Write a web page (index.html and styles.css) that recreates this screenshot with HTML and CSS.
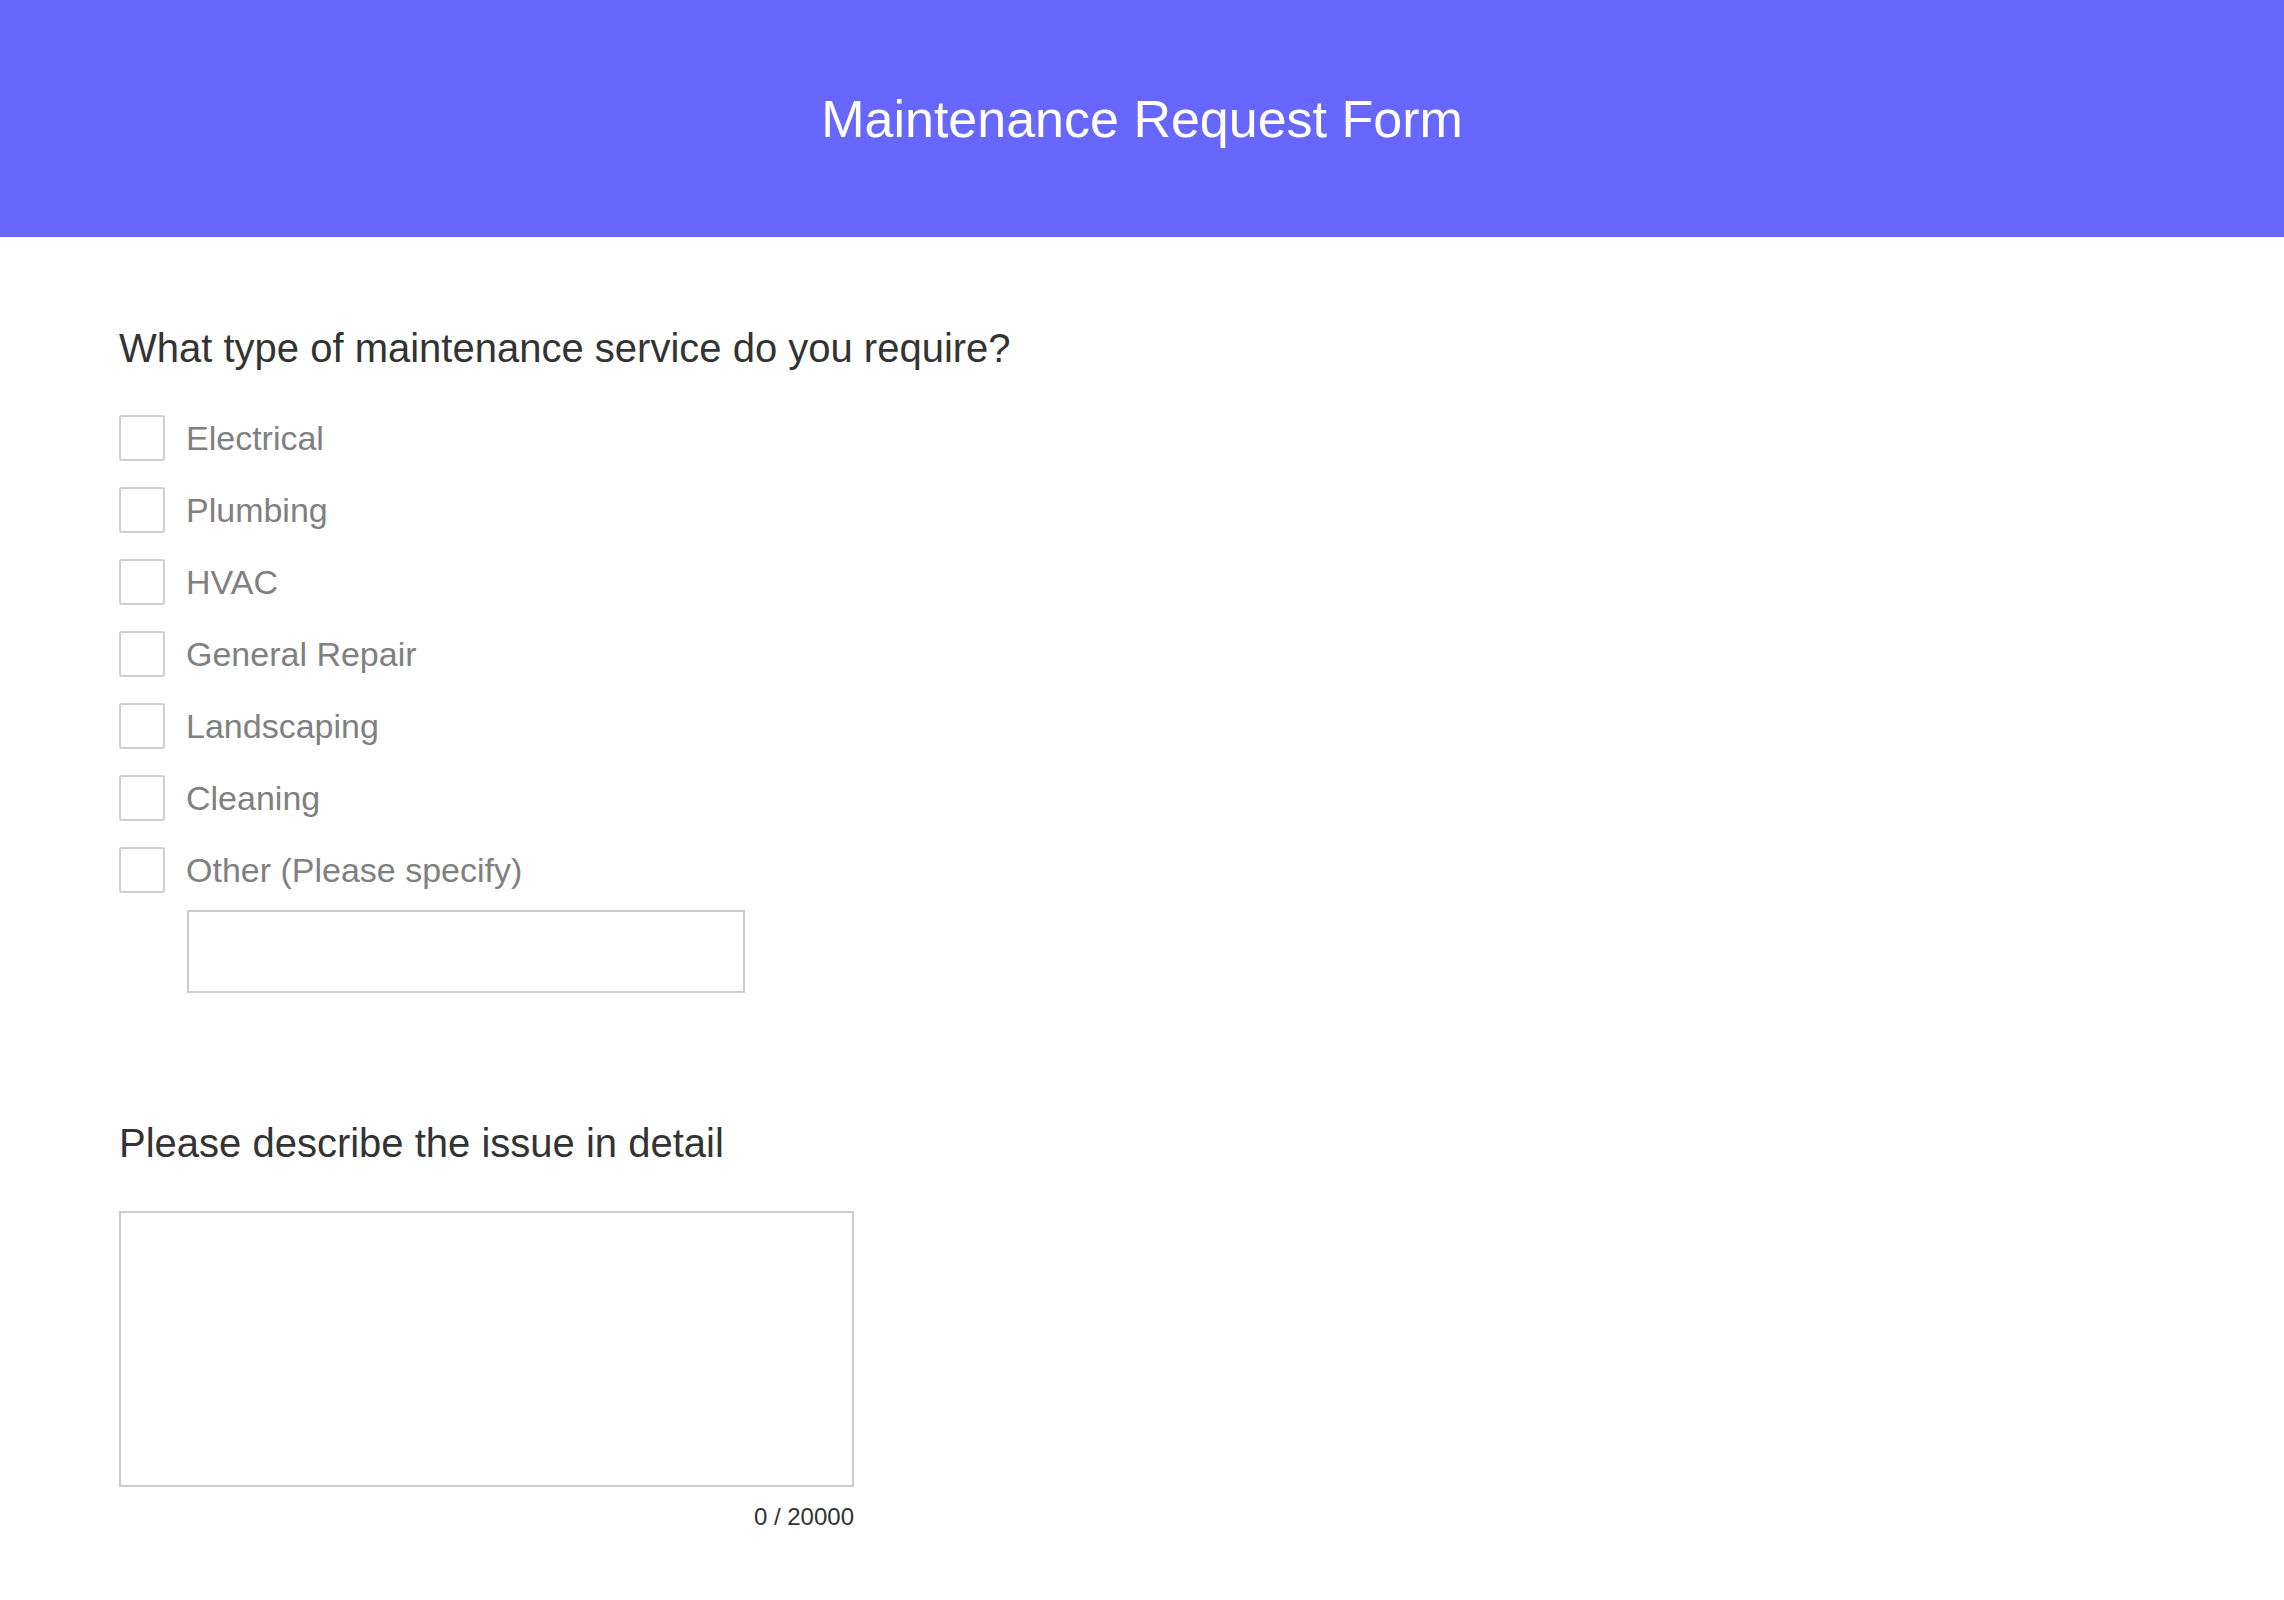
FILE: index.html
```html
<!DOCTYPE html>
<html lang="en">
<head>
<meta charset="utf-8">
<title>Maintenance Request Form</title>
<link rel="stylesheet" href="styles.css">
</head>
<body>
<header class="header">
  <h1 class="title">Maintenance Request Form</h1>
</header>
<main class="content">
  <section class="question q-service">
    <h2 class="question-title">What type of maintenance service do you require?</h2>
    <div class="options">
      <label class="option"><span class="box"></span><span class="option-text">Electrical</span></label>
      <label class="option"><span class="box"></span><span class="option-text">Plumbing</span></label>
      <label class="option"><span class="box"></span><span class="option-text">HVAC</span></label>
      <label class="option"><span class="box"></span><span class="option-text">General Repair</span></label>
      <label class="option"><span class="box"></span><span class="option-text">Landscaping</span></label>
      <label class="option"><span class="box"></span><span class="option-text">Cleaning</span></label>
      <label class="option"><span class="box"></span><span class="option-text">Other (Please specify)</span></label>
    </div>
    <div class="other-input"></div>
  </section>
  <section class="question q-detail">
    <h2 class="question-title">Please describe the issue in detail</h2>
    <div class="detail-wrap">
      <div class="textarea"></div>
      <div class="counter">0 / 20000</div>
    </div>
  </section>
</main>
</body>
</html>
```

FILE: styles.css
```css
html, body {
  margin: 0;
  padding: 0;
  background: #ffffff;
  font-family: "Liberation Sans", Arial, Helvetica, sans-serif;
}

.header {
  height: 237px;
  background: #6767ff;
  display: flex;
  align-items: center;
  justify-content: center;
}

.title {
  margin: 0;
  font-size: 52px;
  font-weight: normal;
  line-height: 60px;
  color: #ffffff;
}

.content {
  padding: 0 0 0 119px;
}

.question-title {
  margin: 0;
  font-size: 40px;
  font-weight: normal;
  line-height: 48px;
  color: #333333;
}

.q-service {
  padding-top: 87px;
}

.options {
  display: flex;
  flex-direction: column;
  gap: 26px;
  margin-top: 43px;
}

.option {
  display: flex;
  align-items: center;
  gap: 21px;
  height: 46px;
}

.box {
  width: 46px;
  height: 46px;
  box-sizing: border-box;
  border: 2.5px solid #cfcfcf;
  border-radius: 3px;
  background: #ffffff;
  flex: none;
}

.option-text {
  font-size: 34px;
  line-height: 46px;
  color: #808080;
}

.other-input {
  margin: 17px 0 0 68px;
  width: 558px;
  height: 83px;
  box-sizing: border-box;
  border: 2px solid #cccccc;
  background: #ffffff;
}

.q-detail {
  padding-top: 126px;
}

.detail-wrap {
  width: 735px;
  margin-top: 44px;
}

.textarea {
  width: 735px;
  height: 276px;
  box-sizing: border-box;
  border: 2px solid #cccccc;
  background: #ffffff;
}

.counter {
  text-align: right;
  font-size: 24px;
  line-height: 28px;
  color: #333333;
  margin-top: 16px;
}
```
